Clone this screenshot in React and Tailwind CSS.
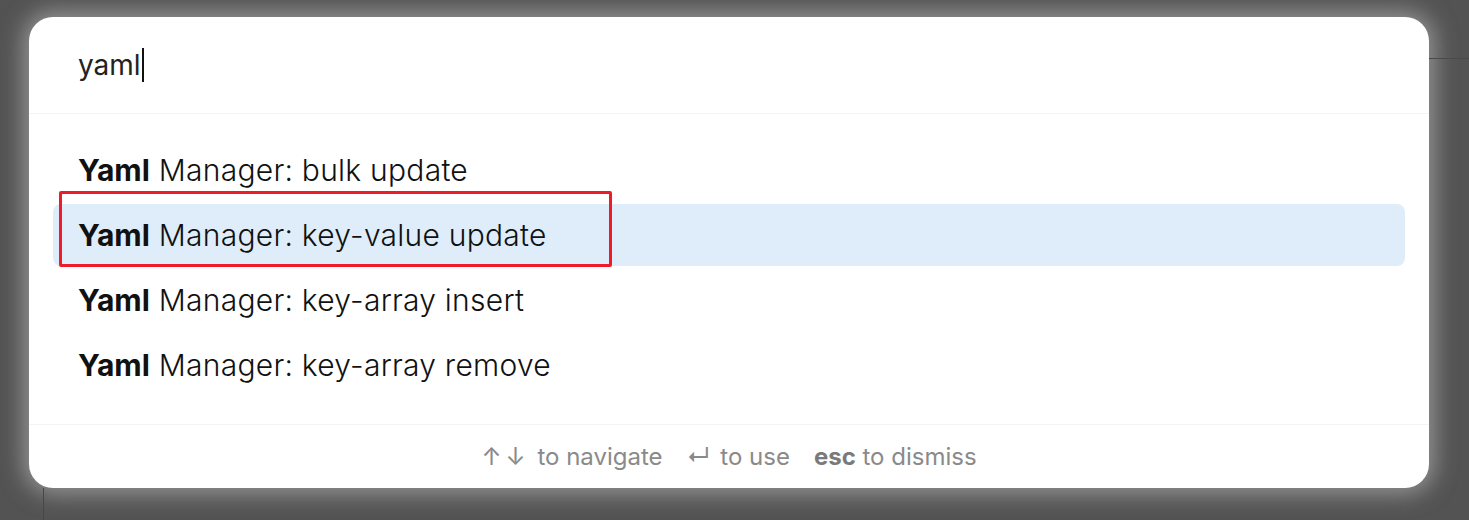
const commands = [
  "bulk update",
  "key-value update",
  "key-array insert",
  "key-array remove",
];

export default function App() {
  return (
    <div
      className="relative w-[1469px] h-[520px] bg-[#535353] overflow-hidden"
      style={{ fontFamily: "Inter, 'Noto Sans', sans-serif" }}
    >
      {/* faint lines of the app behind the overlay */}
      <div className="absolute left-[1429px] right-0 top-[58px] h-px bg-[#4a4a4a]" />
      <div className="absolute left-[43px] top-[488px] bottom-0 w-px bg-[#474747]" />

      <div className="pt-[17px] pl-[29px]">
        <div className="w-[1400px] h-[471px] bg-white rounded-[24px] shadow-[0_0_22px_6px_rgba(200,200,200,0.55)] flex flex-col">
          <div className="h-[97px] border-b border-[#f4f4f4] flex items-center px-[49px]">
            <span className="text-[28px] text-[#222] leading-none">yaml</span>
            <span className="w-[2px] h-[34px] bg-[#111] ml-[1px]" />
          </div>

          <div className="flex-1 px-[24px] pt-[25px] flex flex-col gap-[3px]">
            {commands.map((c, i) => (
              <div
                key={c}
                className={`relative h-[62px] rounded-[8px] flex items-center px-[25px] text-[30px] text-[#111] ${
                  i === 1 ? "bg-[#dfedfb]" : ""
                }`}
              >
                <span className="font-bold">Yaml</span>
                <span className="ml-[9px] font-[350] tracking-[0.25px]">Manager: {c}</span>
                {i === 1 && (
                  <div className="absolute left-[6px] top-[-13px] w-[553px] h-[76px] border-[3px] border-[#ec1c2b] rounded-[2px]" />
                )}
              </div>
            ))}
          </div>

          <div className="h-[64px] border-t border-[#f4f4f4] flex items-center justify-center gap-[24px] text-[24px] text-[#8a8a8a]">
            <span className="flex items-center">
              <span>↑</span>
              <span className="ml-[4px]">↓</span>
              <span className="ml-[12px]">to navigate</span>
            </span>
            <span className="flex items-center">
              <span>↵</span>
              <span className="ml-[10px]">to use</span>
            </span>
            <span>
              <span className="font-bold text-[#7a7a7a]">esc</span> to dismiss
            </span>
          </div>
        </div>
      </div>
    </div>
  );
}
